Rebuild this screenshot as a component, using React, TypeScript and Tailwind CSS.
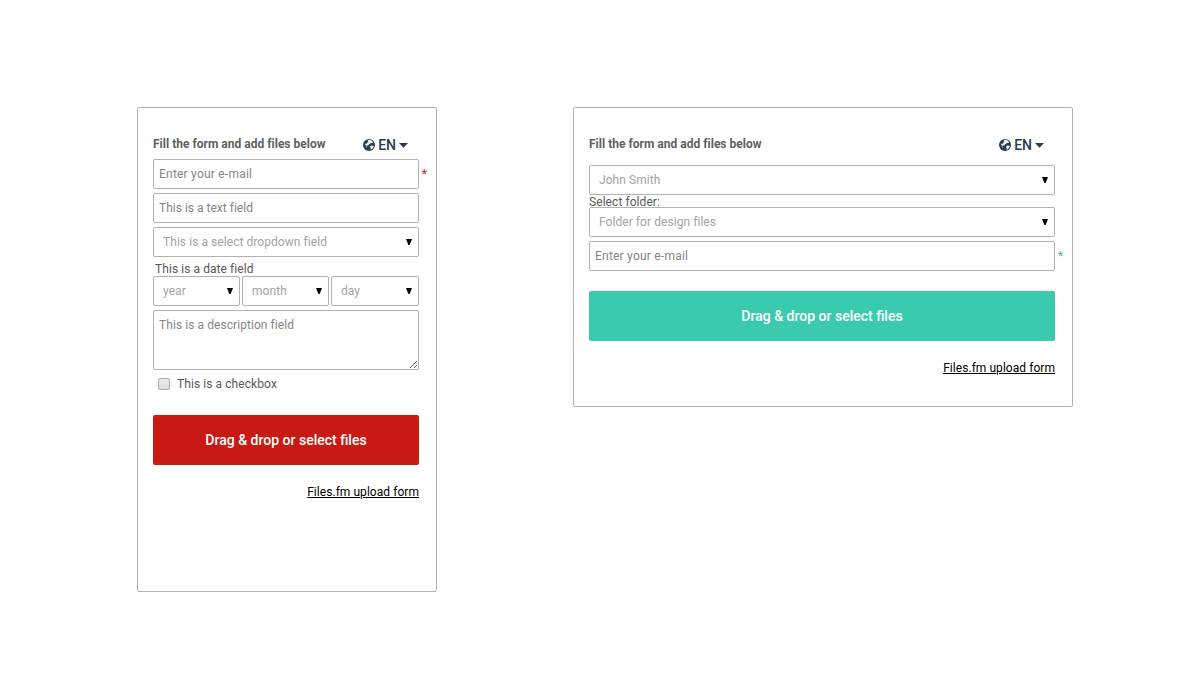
import React from 'react';
import { clsx } from 'clsx';

const fieldBase = 'rounded-[2px] border border-[#b1b1b1] bg-white text-[12px]';

const GlobeIcon: React.FC<{ className?: string }> = ({ className }) => (
  <svg className={className} viewBox="0 0 12 12">
    <circle cx="6" cy="6" r="6" fill="currentColor" />
    <path
      d="M4.8 1.1L7 .8l1.6.7 1 1.1.4 1.3-1.2.2-.9-.2-.7.9-1.2.5-.4 1-1 .1-.8.4-1.3-.6-.5-1.1.8-.6 1 .2.5-1.2 1.1-.7-.6-.8z"
      fill="#fff"
      fillOpacity="0.9"
    />
    <path d="M7.3 6.9l1.4-.4 2.1.4-.5 1.7-1.4 1.7-1.3.5.1-1.6-.7-1.2z" fill="#fff" fillOpacity="0.9" />
    <path d="M2.7 6.6l1.6.9-.2 1-.9.5-.7-1.2z" fill="#fff" fillOpacity="0.35" />
  </svg>
);

const SelectBox: React.FC<{ label: string; className?: string }> = ({ label, className }) => (
  <div className={clsx(fieldBase, 'flex h-[30px] items-center justify-between pl-[9px] pr-[6px] tracking-[0.06px] text-[#a3a3a3]', className)}>
    <span className="leading-[14px]">{label}</span>
    <svg className="h-[6px] w-[6px] shrink-0" viewBox="0 0 6 6">
      <path d="M0 0h6L3.6 6H2.4z" fill="#000" />
    </svg>
  </div>
);

const TextInput: React.FC<{ placeholder: string; required?: string }> = ({ placeholder, required }) => (
  <div className="relative">
    <input
      type="text"
      placeholder={placeholder}
      className={clsx(
        fieldBase,
        'block h-[30px] w-full px-[5px] outline-none placeholder:text-[#858585]',
        required ? 'tracking-[0.22px]' : 'tracking-[0.01px]'
      )}
    />
    {required && (
      <span className={clsx('absolute -right-[8px] top-[8px] text-[12px] leading-[14px]', required)}>*</span>
    )}
  </div>
);

const FormHeader: React.FC = () => (
  <div className="flex h-[18px] items-start justify-between pr-[10px]">
    <h1 className="mt-[1px] text-[12px] font-bold leading-[16px] tracking-[0.01px] text-[#606060]">
      Fill the form and add files below
    </h1>
    <button type="button" className="mt-[1px] flex h-[18px] items-center text-[14px] font-medium text-[#2b3b4e]">
      <GlobeIcon className="mr-[3px] h-[12px] w-[12px]" />
      <span className="leading-[18px]">EN</span>
      <svg className="ml-[3px] mr-[1px] h-[5px] w-[9px]" viewBox="0 0 9 5">
        <path d="M0 0h9L4.5 4.8z" fill="currentColor" />
      </svg>
    </button>
  </div>
);

const UploadArea: React.FC<{ color: string }> = ({ color }) => (
  <div className="flex flex-col items-end">
    <button
      type="button"
      className={clsx('h-[50px] w-full rounded-[2px] text-[14px] font-medium leading-[50px] text-white', color)}
    >
      Drag &amp; drop or select files
    </button>
    <a href="#" className="mt-[20px] text-[12px] leading-[14px] tracking-[0.05px] text-black underline">
      Files.fm upload form
    </a>
  </div>
);

const NarrowForm: React.FC = () => (
  <section className="h-[485px] w-[300px] rounded-[2px] border border-[#b1b1b1] pl-[15px] pr-[17px] pt-[27px]">
    <FormHeader />
    <div className="mt-[6px] flex flex-col gap-1">
      <TextInput placeholder="Enter your e-mail" required="text-[#c91913]" />
      <TextInput placeholder="This is a text field" />
      <SelectBox label="This is a select dropdown field" />
    </div>
    <div className="mt-[5px] pl-[2px] text-[12px] leading-[14px] tracking-[0.07px] text-[#58585a]">This is a date field</div>
    <div className="flex gap-[2px]">
      <SelectBox label="year" className="w-[87px]" />
      <SelectBox label="month" className="w-[87px]" />
      <SelectBox label="day" className="w-[88px]" />
    </div>
    <textarea
      placeholder="This is a description field"
      className={clsx(fieldBase, 'mt-1 block h-[60px] w-full px-[5px] pt-[7px] leading-[14px] tracking-[0.07px] outline-none placeholder:text-[#858585]')}
    />
    <label className="mt-[7px] flex h-[14px] items-center pl-[5px] text-[12px] leading-[14px] tracking-[0.08px] text-[#58585a]">
      <span className="mr-[7px] h-[12px] w-[12px] rounded-[2px] border border-[#aaaaaa] bg-linear-to-b from-[#ececec] to-[#dcdcdc]" />
      This is a checkbox
    </label>
    <div className="mt-[24px]">
      <UploadArea color="bg-[#c91913]" />
    </div>
  </section>
);

const WideForm: React.FC = () => (
  <section className="h-[300px] w-[500px] rounded-[2px] border border-[#b1b1b1] pl-[15px] pr-[17px] pt-[27px]">
    <FormHeader />
    <SelectBox label="John Smith" className="mt-[12px]" />
    <div className="h-[12px] text-[12px] leading-[14px] tracking-[0.07px] text-[#58585a]">Select folder:</div>
    <SelectBox label="Folder for design files" className="mb-1" />
    <TextInput placeholder="Enter your e-mail" required="text-[#3bbca0]" />
    <div className="mt-[20px]">
      <UploadArea color="bg-[#3acbaf]" />
    </div>
  </section>
);

export default function App() {
  return (
    <main className="flex h-[700px] w-[1200px] items-start gap-[136px] bg-white pl-[137px] pt-[107px] font-['Roboto',sans-serif]">
      <NarrowForm />
      <WideForm />
    </main>
  );
}
